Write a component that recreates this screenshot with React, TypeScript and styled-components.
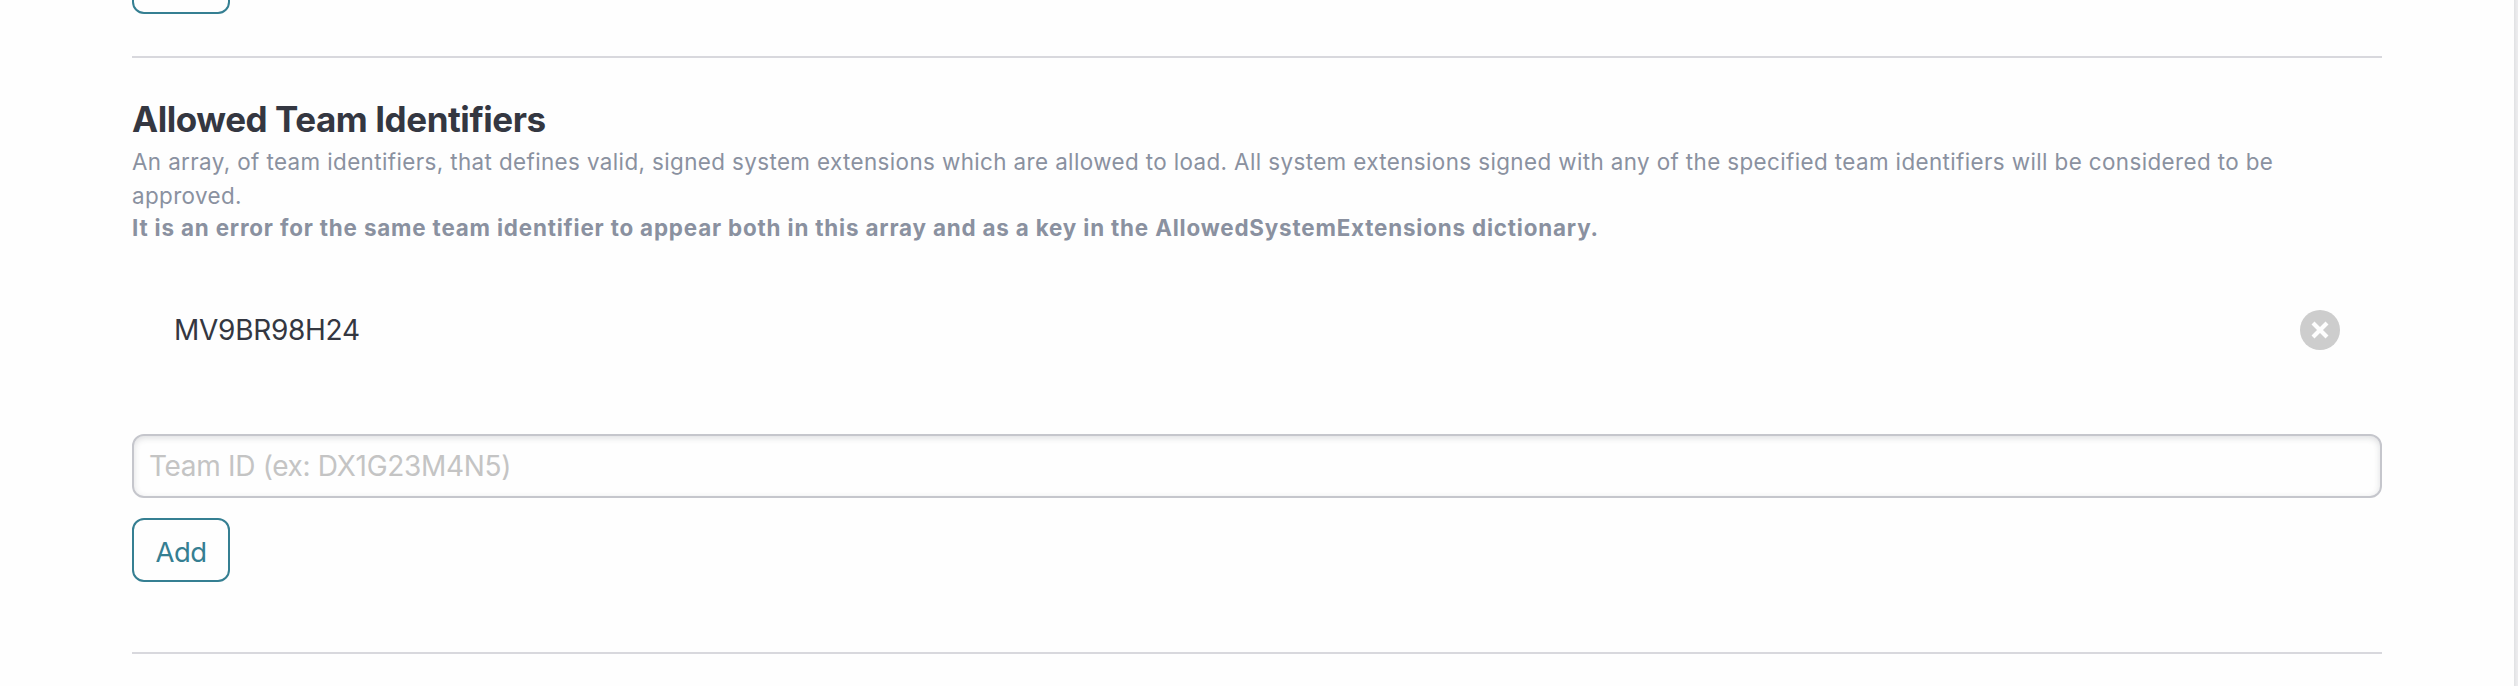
import React from "react";
import styled, { createGlobalStyle } from "styled-components";

const GlobalStyle = createGlobalStyle`
  *, *::before, *::after { box-sizing: border-box; }
  html, body { margin: 0; background: #fefefe; overflow: hidden; }
  body { font-family: Inter, "Liberation Sans", sans-serif; color: #343741; }
`;

const Page = styled.div`
  display: flex;
  height: 686px;
  overflow: hidden;
`;

const Panel = styled.main`
  flex: 1;
  min-width: 0;
  padding: 0 132px;
  background: #fefefe;
`;

const Gutter = styled.aside`
  width: 4px;
  background: linear-gradient(to right, #e0e1e3, #ececee 75%);
`;

const Section = styled.section<{ $clipped?: boolean }>`
  display: flex;
  flex-direction: column;
  align-items: flex-start;
  justify-content: ${(p) => (p.$clipped ? "flex-end" : "flex-start")};
  height: ${(p) => (p.$clipped ? "58px" : "596px")};
  padding: ${(p) => (p.$clipped ? "0 0 42px" : "39px 0 0")};
  border-bottom: 2px solid #d8d8dd;
`;

const Heading = styled.h2`
  margin: 0;
  font-size: 35px;
  line-height: 44px;
  font-weight: 700;
  letter-spacing: -0.44px;
`;

const Description = styled.p`
  margin: 4px 0 0;
  width: 100%;
  font-size: 22.4px;
  line-height: 34px;
  letter-spacing: 0.39px;
  color: #8a91a0;
`;

const Warning = styled.strong`
  display: block;
  line-height: 30px;
  font-weight: 700;
  letter-spacing: 0.82px;
`;

const Identifier = styled.div`
  display: flex;
  align-items: center;
  justify-content: space-between;
  width: 100%;
  height: 100px;
  margin-top: 37px;
  padding: 0 42px;
  font-size: 28px;
  letter-spacing: -0.28px;
`;

const RemoveButton = styled.button`
  display: flex;
  width: 40px;
  height: 40px;
  padding: 0;
  border: 0;
  border-radius: 50%;
  background: #cdcdcd;
`;

const TeamInput = styled.input`
  width: 100%;
  height: 64px;
  margin-top: 54px;
  padding: 0 15px;
  border: 2px solid #c5c6cc;
  border-radius: 12px;
  background: #fefefe;
  box-shadow: inset 0 2px 6px rgba(50, 55, 70, 0.16);
  font: 28px Inter, "Liberation Sans", sans-serif;
  letter-spacing: -0.32px;
  outline: none;
  &::placeholder { color: #c4c4c4; opacity: 1; }
`;

const AddButton = styled.button`
  flex: none;
  width: 98px;
  height: 64px;
  margin-top: 20px;
  padding: 4px 0 0;
  border: 2px solid #357f92;
  border-radius: 12px;
  background: #fefefe;
  color: #357f92;
  font: 27.5px Inter, "Liberation Sans", sans-serif;
  letter-spacing: -0.5px;
`;

export default function App() {
  return (
    <>
      <GlobalStyle />
      <Page>
        <Panel>
          <Section $clipped>
            <AddButton aria-label="Add" />
          </Section>
          <Section>
            <Heading>Allowed Team Identifiers</Heading>
            <Description>
              An array, of team identifiers, that defines valid, signed system extensions which are allowed to load. All
              system extensions signed with any of the specified team identifiers will be considered to be approved.
              <Warning>
                It is an error for the same team identifier to appear both in this array and as a key in the
                AllowedSystemExtensions dictionary.
              </Warning>
            </Description>
            <Identifier>
              <span>MV9BR98H24</span>
              <RemoveButton aria-label="Remove">
                <svg width="40" height="40" viewBox="0 0 40 40" fill="none" stroke="#fefefe" strokeWidth="4.2">
                  <path d="M13 13 27 27M27 13 13 27" />
                </svg>
              </RemoveButton>
            </Identifier>
            <TeamInput placeholder="Team ID (ex: DX1G23M4N5)" />
            <AddButton>Add</AddButton>
          </Section>
        </Panel>
        <Gutter />
      </Page>
    </>
  );
}
